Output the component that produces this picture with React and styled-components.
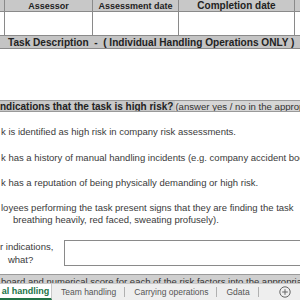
import React from "react";
import styled, { createGlobalStyle } from "styled-components";

const Global = createGlobalStyle`
	html, body {
		margin: 0;
		padding: 0;
		background: #ffffff;
	}
	body {
		width: 300px;
		height: 300px;
		overflow: hidden;
		font-family: "Liberation Sans", Arial, sans-serif;
	}
`;

const questions = [
	{ text: "k is identified as high risk in company risk assessments.", top: 14 },
	{ text: "k has a history of manual handling incidents (e.g. company accident book", top: 14 },
	{ text: "k has a reputation of being physically demanding or high risk.", top: 13 },
	{ text: "loyees performing the task present signs that they are finding the task", top: 13 }
];

const tabs = ["Team handling", "Carrying operations", "Gdata"];

function App() {
	return (
		<Page>
			<Global />
			<Sheet>
				<HeadRow>
					<Cell />
					<HeadCell>Assessor</HeadCell>
					<HeadCell>Assessment date</HeadCell>
					<HeadCell $big>Completion date</HeadCell>
					<Cell />
				</HeadRow>
				<BlankRow>
					<Cell />
					<Cell />
					<Cell />
					<Cell />
					<Cell />
				</BlankRow>
				<TaskBand>Task Description&nbsp;&nbsp;-&nbsp;&nbsp;( Individual Handling Operations ONLY )</TaskBand>
				<RiskBand>
					<Strong>ndications that the task is high risk?</Strong>
					<Note>(answer yes / no in the appropriate column)</Note>
				</RiskBand>
				{questions.map((q) => (
					<Question key={q.text} style={{ marginTop: q.top }}>
						{q.text}
					</Question>
				))}
				<Question $indent>breathing heavily, red faced, sweating profusely).</Question>
				<OtherRow>
					<OtherLabel>
						<span>r indications,</span>
						<span>&nbsp;&nbsp;&nbsp;what?</span>
					</OtherLabel>
					<AnswerBox />
				</OtherRow>
				<ScoreStrip>
					<ScoreText>board and numerical score for each of the risk factors into the appropriate</ScoreText>
				</ScoreStrip>
			</Sheet>
			<TabBar>
				<ActiveTab>al handling</ActiveTab>
				{tabs.map((t) => (
					<Tab key={t}>{t}</Tab>
				))}
				<AddButton aria-label="add sheet">
					<svg width="12" height="12" viewBox="0 0 12 12">
						<circle cx="6" cy="6" r="5.2" fill="none" stroke="#666" strokeWidth="1" />
						<path d="M6 3.2v5.6M3.2 6h5.6" stroke="#666" strokeWidth="1" />
					</svg>
				</AddButton>
			</TabBar>
		</Page>
	);
}

const Page = styled.div`
	width: 300px;
	height: 300px;
	display: flex;
	flex-direction: column;
	overflow: hidden;
	background: #ffffff;
`;

const Sheet = styled.div`
	flex: 1;
	display: flex;
	flex-direction: column;
	overflow: hidden;
`;

const gridCols = "5px 88px 86px 116px 1fr";

const HeadRow = styled.div`
	display: grid;
	grid-template-columns: ${gridCols};
	height: 12px;
	background: #c8c8c8;
	border-bottom: 1px solid #8a8a8a;
`;

const Cell = styled.div`
	border-right: 1px solid #8a8a8a;
	&:last-child {
		border-right: none;
	}
`;

const HeadCell = styled(Cell)`
	display: flex;
	align-items: center;
	justify-content: center;
	font-weight: bold;
	font-size: ${(p) => (p.$big ? "10px" : "9px")};
	color: #222;
	white-space: nowrap;
	overflow: hidden;
`;

const BlankRow = styled.div`
	display: grid;
	grid-template-columns: ${gridCols};
	height: 24px;
	border-bottom: 1px solid #8a8a8a;
`;

const TaskBand = styled.div`
	height: 12px;
	background: #c4c4c4;
	border-bottom: 1px solid #8a8a8a;
	padding-left: 8px;
	display: flex;
	align-items: center;
	font-size: 10.1px;
	font-weight: bold;
	color: #222;
	white-space: nowrap;
	margin-bottom: 51px;
`;

const RiskBand = styled.div`
	height: 11px;
	display: flex;
	align-items: center;
	white-space: nowrap;
	overflow: hidden;
	background: #d6d6d6;
	border-top: 1px solid #9a9a9a;
	border-bottom: 1px solid #9a9a9a;
	font-size: 10px;
	color: #222;
`;

const Strong = styled.span`
	font-weight: bold;
	background: #c8c8c8;
	padding-right: 2px;
`;

const Note = styled.span`
	color: #333;
	font-size: 9.6px;
`;

const Question = styled.div`
	height: 12px;
	line-height: 12px;
	font-size: 9.5px;
	color: #3a3a3a;
	white-space: nowrap;
	padding-left: ${(p) => (p.$indent ? "13px" : "1px")};
`;

const OtherRow = styled.div`
	display: flex;
	align-items: center;
	margin-top: 14px;
	height: 26px;
`;

const OtherLabel = styled.div`
	width: 64px;
	display: flex;
	flex-direction: column;
	font-size: 9.5px;
	line-height: 13px;
	color: #3a3a3a;
	white-space: nowrap;
`;

const AnswerBox = styled.div`
	flex: 1;
	height: 24px;
	border: 1px solid #8a8a8a;
	border-right: none;
	background: #fff;
`;

const ScoreStrip = styled.div`
	margin-top: 8px;
	height: 8px;
	background: #cfcfcf;
	border-top: 1px solid #9a9a9a;
	overflow: hidden;
`;

const ScoreText = styled.div`
	font-size: 9.5px;
	line-height: 12px;
	color: #333;
	white-space: nowrap;
	padding-left: 1px;
	margin-top: 1px;
`;

const TabBar = styled.div`
	height: 16px;
	display: flex;
	align-items: stretch;
	background: #eeeeee;
	border-top: 1px solid #c8c8c8;
	font-family: "Liberation Sans", Arial, sans-serif;
	font-size: 8.5px;
`;

const ActiveTab = styled.div`
	width: 52px;
	flex-shrink: 0;
	display: flex;
	align-items: center;
	justify-content: center;
	background: #ffffff;
	color: #217346;
	font-weight: bold;
	font-size: 9px;
	border-bottom: 2px solid #217346;
	border-right: 1px solid #c8c8c8;
	box-sizing: border-box;
	white-space: nowrap;
`;

const Tab = styled.div`
	display: flex;
	flex-shrink: 0;
	align-items: center;
	padding: 0 9px 0 9px;
	color: #555;
	white-space: nowrap;
	position: relative;
	&::after {
		content: "";
		position: absolute;
		right: 0;
		top: 3px;
		bottom: 3px;
		width: 1px;
		background: #b0b0b0;
	}
`;

const AddButton = styled.div`
	display: flex;
	flex-shrink: 0;
	align-items: center;
	padding-left: 20px;
`;

export default App;
